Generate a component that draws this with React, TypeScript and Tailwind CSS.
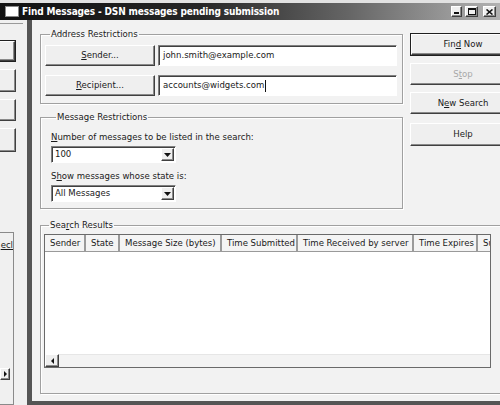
import React from "react";

const raised =
  "border border-t-white border-l-white border-r-[#404040] border-b-[#404040] shadow-[inset_-1px_-1px_0_#8a8a8a] bg-[#efefef]";
const sunken =
  "border border-t-[#808080] border-l-[#808080] border-r-white border-b-white shadow-[inset_1px_1px_0_#404040] bg-white";

function Btn({
  children,
  className = "",
  disabled = false,
  isDefault = false,
}: {
  children: React.ReactNode;
  className?: string;
  disabled?: boolean;
  isDefault?: boolean;
}) {
  const face = (
    <div
      className={`flex h-full w-full items-center justify-center ${raised} ${
        disabled ? "text-[#a8a8a8]" : "text-[#1a1a1a]"
      }`}
    >
      {children}
    </div>
  );
  if (isDefault) {
    return <div className={`border border-[#202020] ${className}`}>{face}</div>;
  }
  return <div className={className}>{face}</div>;
}

function Group({
  label,
  children,
  className = "",
}: {
  label: React.ReactNode;
  children: React.ReactNode;
  className?: string;
}) {
  return (
    <fieldset
      className={`border border-[#a0a0a0] shadow-[inset_1px_1px_0_#ffffff,1px_1px_0_#ffffff] ${className}`}
    >
      <legend className="ml-[5px] px-[1px] text-[#1a1a1a] leading-[14px]">{label}</legend>
      {children}
    </fieldset>
  );
}

function Select({ value }: { value: string }) {
  return (
    <div className={`flex h-[17px] w-[125px] items-center ${sunken}`}>
      <span className="flex-1 pl-[3px] text-[#1a1a1a]">{value}</span>
      <div className={`mr-[1px] flex h-[13px] w-[13px] items-center justify-center ${raised}`}>
        <svg width="7" height="4" viewBox="0 0 7 4">
          <path d="M0 0h7L3.5 4z" fill="#111" />
        </svg>
      </div>
    </div>
  );
}

const columns: [string, number][] = [
  ["Sender", 41],
  ["State", 34],
  ["Message Size (bytes)", 102],
  ["Time Submitted", 76],
  ["Time Received by server", 116],
  ["Time Expires", 64],
  ["Subject", 80],
];

function LeftWindow() {
  return (
    <div className="relative flex w-[27px] shrink-0 flex-col bg-[#f0f0f0]">
      <div className="mt-[3px] h-[1px] w-[23px] bg-[#9a9a9a]" />
      <div className="mt-[16px] flex flex-col gap-[7px]">
        <div className="ml-[-24px] h-[22px] w-[40px] border border-[#202020]">
          <div className={`h-full w-full ${raised}`} />
        </div>
        <div className={`ml-[-24px] h-[23px] w-[40px] ${raised}`} />
        <div className={`ml-[-24px] h-[22px] w-[40px] ${raised}`} />
        <div className={`ml-[-24px] h-[24px] w-[40px] ${raised}`} />
      </div>
      <div className="mt-[80px] flex w-[14px] flex-1 flex-col border-r border-t border-[#8a8a8a] border-b">
        <div className="mt-[5px] text-right text-[9.5px] leading-[13px] text-[#1a1a1a] underline">ecl</div>
        <div className="flex-1" />
        <div className={`mb-[24px] flex h-[12px] w-[10px] items-center justify-center ${raised}`}>
          <svg width="3" height="6" viewBox="0 0 3 6">
            <path d="M0 0l3 3-3 3z" fill="#111" />
          </svg>
        </div>
      </div>
    </div>
  );
}

export default function App() {
  return (
    <div className="flex h-[405px] w-[500px] flex-col overflow-hidden bg-[#e2e2e2] font-['DejaVu_Sans_Condensed','DejaVu_Sans',sans-serif] text-[9.5px]">
      {/* title bar */}
      <div className="mt-[3px] flex h-[17px] shrink-0 items-center bg-[linear-gradient(90deg,#111111_0%,#262626_40%,#666666_70%,#b2b2b2_100%)]">
        <div className="ml-[5px] h-[11px] w-[14px] border border-[#888] bg-white" />
        <span className="ml-[3px] text-[10px] font-bold tracking-[-0.15px] text-white">
          Find Messages - DSN messages pending submission
        </span>
        <div className="flex-1" />
        <div className="mr-[4px] flex items-center gap-[3px]">
          <div className={`flex h-[11px] w-[11px] items-end justify-center pb-[2px] ${raised}`}>
            <div className="h-[2px] w-[5px] bg-[#111]" />
          </div>
          <div className={`flex h-[11px] w-[13px] items-center justify-center ${raised}`}>
            <div className="h-[7px] w-[8px] border border-t-2 border-[#111]" />
          </div>
          <div className={`ml-[2px] flex h-[11px] w-[13px] items-center justify-center ${raised}`}>
            <svg width="7" height="6" viewBox="0 0 7 6">
              <path d="M0.5 0.5l6 5M6.5 0.5l-6 5" stroke="#111" strokeWidth="1.6" />
            </svg>
          </div>
        </div>
      </div>

      <div className="flex min-h-0 flex-1">
        <LeftWindow />

        {/* dialog body */}
        <div className="flex min-w-0 flex-1 flex-col overflow-hidden border-b-[4px] border-l-[5px] border-[#555555] bg-[#f2f2f2] pl-[8px] pt-[7px]">
          <div className="flex gap-[7px]">
            <div className="flex w-[363px] shrink-0 flex-col gap-[6px]">
              <Group label="Address Restrictions" className="px-[4px] pb-[7px] pt-[4px]">
                <div className="flex flex-col gap-[9px] text-[9.5px]">
                  <div className="flex h-[21px] gap-[3px]">
                    <Btn className="w-[110px]">
                      <span>
                        <u>S</u>ender...
                      </span>
                    </Btn>
                    <div className={`flex w-[239px] items-center pl-[4px] text-[#1a1a1a] ${sunken}`}>
                      john.smith@example.com
                    </div>
                  </div>
                  <div className="flex h-[21px] gap-[3px]">
                    <Btn className="w-[110px]">
                      <span>
                        <u>R</u>ecipient...
                      </span>
                    </Btn>
                    <div className={`flex w-[239px] items-center pl-[4px] text-[#1a1a1a] ${sunken}`}>
                      accounts@widgets.com
                      <span className="ml-[1px] h-[12px] w-[1px] bg-[#111]" />
                    </div>
                  </div>
                </div>
              </Group>

              <Group label="Message Restrictions" className="px-[10px] pb-[6px] pt-[6px]">
                <div className="text-[#1a1a1a] leading-[13px]">
                  <u>N</u>umber of messages to be listed in the search:
                </div>
                <div className="mt-[3px]">
                  <Select value="100" />
                </div>
                <div className="mt-[6px] text-[#1a1a1a] leading-[13px]">
                  S<u>h</u>ow messages whose state is:
                </div>
                <div className="mt-[3px]">
                  <Select value="All Messages" />
                </div>
              </Group>
            </div>

            <div className="mt-[6px] flex w-[106px] shrink-0 flex-col gap-[7px]">
              <Btn isDefault className="h-[23px]">
                <span>
                  Fin<u>d</u> Now
                </span>
              </Btn>
              <Btn disabled className="h-[22px]">
                <span>
                  S<u>t</u>op
                </span>
              </Btn>
              <Btn className="h-[22px]">
                <span>
                  N<u>e</u>w Search
                </span>
              </Btn>
              <Btn className="mt-[2px] h-[23px]">Help</Btn>
            </div>
          </div>

          <Group
            label={
              <span>
                Sea<u>r</u>ch Results
              </span>
            }
            className="mt-[9px] w-[480px] px-[3px] pb-[25px] pt-[2px]"
          >
            <div className="flex h-[134px] w-[447px] flex-col border border-[#6a6a6a] bg-white">
              <div className="flex h-[17px] shrink-0 overflow-hidden">
                {columns.map(([name, w]) => (
                  <div
                    key={name}
                    style={{ width: w }}
                    className="flex shrink-0 items-center border-r-2 border-r-[#9a9a9a] border-b border-b-[#9a9a9a] bg-[#f4f4f4] pl-[5px] text-[#1a1a1a] whitespace-nowrap overflow-hidden"
                  >
                    {name}
                  </div>
                ))}
              </div>
              <div className="flex-1" />
              <div className="flex h-[13px] shrink-0 bg-[#f3f3f3]">
                <div className={`flex w-[14px] items-center justify-center ${raised}`}>
                  <svg width="3" height="6" viewBox="0 0 3 6">
                    <path d="M3 0L0 3l3 3z" fill="#111" />
                  </svg>
                </div>
                <div className="flex-1 border-t border-[#e6e6e6]" />
              </div>
            </div>
          </Group>
        </div>
      </div>
    </div>
  );
}
